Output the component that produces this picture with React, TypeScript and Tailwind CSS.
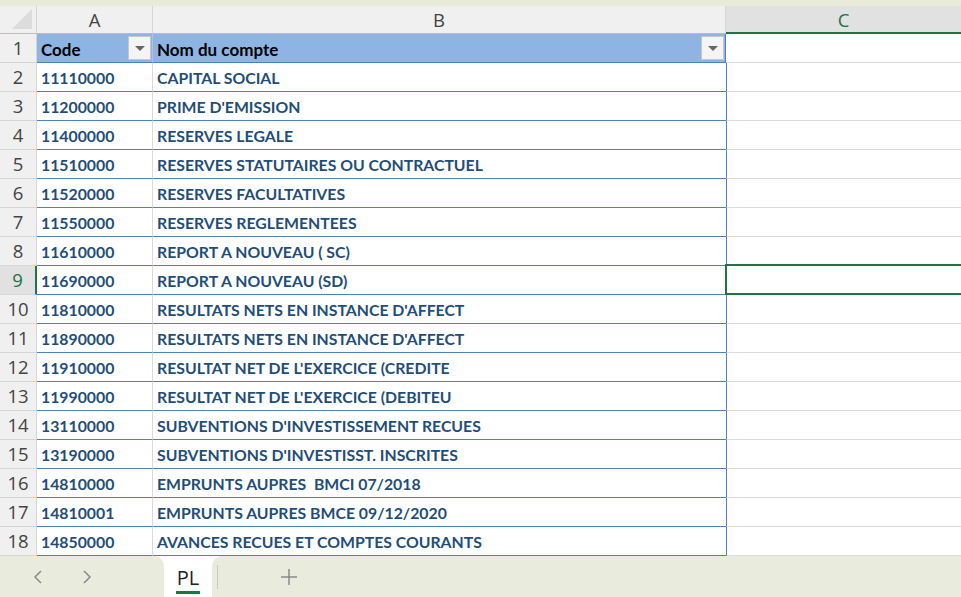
import React from "react";

const rows: [string, string][] = [
  ["11110000", "CAPITAL SOCIAL"],
  ["11200000", "PRIME D'EMISSION"],
  ["11400000", "RESERVES LEGALE"],
  ["11510000", "RESERVES STATUTAIRES OU CONTRACTUEL"],
  ["11520000", "RESERVES FACULTATIVES"],
  ["11550000", "RESERVES REGLEMENTEES"],
  ["11610000", "REPORT A NOUVEAU ( SC)"],
  ["11690000", "REPORT A NOUVEAU (SD)"],
  ["11810000", "RESULTATS NETS EN INSTANCE D'AFFECT"],
  ["11890000", "RESULTATS NETS EN INSTANCE D'AFFECT"],
  ["11910000", "RESULTAT NET DE L'EXERCICE (CREDITE"],
  ["11990000", "RESULTAT NET DE L'EXERCICE (DEBITEU"],
  ["13110000", "SUBVENTIONS D'INVESTISSEMENT RECUES"],
  ["13190000", "SUBVENTIONS D'INVESTISST. INSCRITES"],
  ["14810000", "EMPRUNTS AUPRES  BMCI 07/2018"],
  ["14810001", "EMPRUNTS AUPRES BMCE 09/12/2020"],
  ["14850000", "AVANCES RECUES ET COMPTES COURANTS"],
];

const cellFont = { fontFamily: "Lato, 'Open Sans', sans-serif" };
const uiFont = { fontFamily: "'Open Sans', 'Noto Sans', sans-serif" };

function FilterButton() {
  return (
    <div className="absolute right-[1px] top-[2px] w-[23px] h-[24px] bg-[#f4f4f4] border border-[#c6c6c6] flex items-center justify-center">
      <div className="w-0 h-0 border-l-[5px] border-r-[5px] border-t-[5px] border-l-transparent border-r-transparent border-t-[#666]" />
    </div>
  );
}

function RowHeader({ n, active }: { n: number; active?: boolean }) {
  return (
    <div
      className={
        "w-[37px] shrink-0 flex items-center justify-center border-b border-[#d6d6d6] text-[18.5px] " +
        (active
          ? "bg-[#e1e1e1] text-[#217346] border-r-2 border-r-[#217346]"
          : "bg-[#f0f0f0] text-[#444] border-r border-r-[#d6d6d6]")
      }
      style={uiFont}
    >
      {n}
    </div>
  );
}

export default function App() {
  return (
    <div className="w-[961px] h-[597px] bg-white overflow-hidden flex flex-col">
      <div className="h-[6px] bg-[#e9ebd9] shrink-0" />

      {/* column headers */}
      <div className="flex h-[28px] shrink-0 bg-[#f0f0f0] text-[18.5px] text-[#444]" style={uiFont}>
        <div className="w-[37px] shrink-0 relative border-r border-[#d6d6d6] border-b border-b-[#bcbcbc]">
          <div
            className="absolute right-[4px] bottom-[4px] w-0 h-0"
            style={{ borderBottom: "20px solid #dcdcdc", borderLeft: "20px solid transparent" }}
          />
        </div>
        <div className="w-[116px] shrink-0 flex items-center justify-center pt-[1px] border-r border-[#d6d6d6] border-b border-b-[#bcbcbc]">A</div>
        <div className="w-[573px] shrink-0 flex items-center justify-center pt-[1px] border-r border-[#d6d6d6] border-b border-b-[#bcbcbc]">B</div>
        <div className="flex-1 flex items-center justify-center pt-[1px] bg-[#e1e1e1] text-[#217346] border-b-2 border-[#217346]">C</div>
      </div>

      {/* row 1: table header */}
      <div className="flex h-[29px] shrink-0 text-[17px]" style={cellFont}>
        <RowHeader n={1} />
        <div className="w-[116px] shrink-0 relative bg-[#8db4e2] border-b border-[#4f81bd] border-r border-r-[#a9c4e6] font-bold text-black pl-[4px] pt-[3px] flex items-center">
          Code
          <FilterButton />
        </div>
        <div className="w-[573px] shrink-0 relative bg-[#8db4e2] border-b border-[#4f81bd] border-r border-r-[#4f81bd] font-bold text-black pl-[4px] pt-[3px] flex items-center">
          Nom du compte
          <FilterButton />
        </div>
        <div className="flex-1 border-b border-[#dadada]" />
      </div>

      {rows.map(([code, name], i) => {
        const n = i + 2;
        const active = n === 9;
        return (
          <div key={n} className="flex h-[29px] shrink-0 text-[15.8px]" style={cellFont}>
            <RowHeader n={n} active={active} />
            <div className="w-[116px] shrink-0 border-b border-[#4f81bd] border-r border-r-[#d9d9d9] font-bold text-[#1f4e79] pl-[4px] pt-[2px] flex items-center">
              {code}
            </div>
            <div className="w-[573px] shrink-0 border-b border-[#4f81bd] font-bold text-[#1f4e79] pl-[4px] pt-[2px] flex items-center whitespace-pre">
              {name}
            </div>
            <div className="flex-1 relative border-l border-[#4f81bd] border-b border-b-[#dadada]">
              {active && (
                <div className="absolute left-[-2px] top-[-2px] bottom-[-1px] right-[-3px] border-2 border-[#217346]" />
              )}
            </div>
          </div>
        );
      })}

      {/* sheet tabs */}
      <div className="flex flex-1 bg-white" style={uiFont}>
        <div className="w-[164px] shrink-0 bg-[#e9ebdc] rounded-tr-[10px] flex items-center text-[#8a8a8a]">
          <svg className="ml-[31px]" width="14" height="16" viewBox="0 0 14 16" fill="none" stroke="currentColor" strokeWidth="1.5">
            <path d="M10 2 L4 8 L10 14" />
          </svg>
          <svg className="ml-[35px]" width="14" height="16" viewBox="0 0 14 16" fill="none" stroke="currentColor" strokeWidth="1.5">
            <path d="M4 2 L10 8 L4 14" />
          </svg>
        </div>
        <div className="w-[48px] shrink-0 bg-white flex flex-col items-center justify-center relative">
          <span className="text-[20px] text-[#222] leading-none mt-[3px]">PL</span>
          <div className="absolute bottom-[3px] left-[12px] w-[24px] h-[3px] bg-[#107c41]" />
        </div>
        <div className="flex-1 bg-[#e9ebdc] rounded-tl-[10px] flex items-center">
          <div className="ml-[5px] w-px h-[24px] bg-[#c8c8c8]" />
          <svg className="ml-[62px]" width="18" height="18" viewBox="0 0 18 18" stroke="#8a8a8a" strokeWidth="1.5">
            <path d="M9 1 V17 M1 9 H17" />
          </svg>
        </div>
      </div>
    </div>
  );
}
